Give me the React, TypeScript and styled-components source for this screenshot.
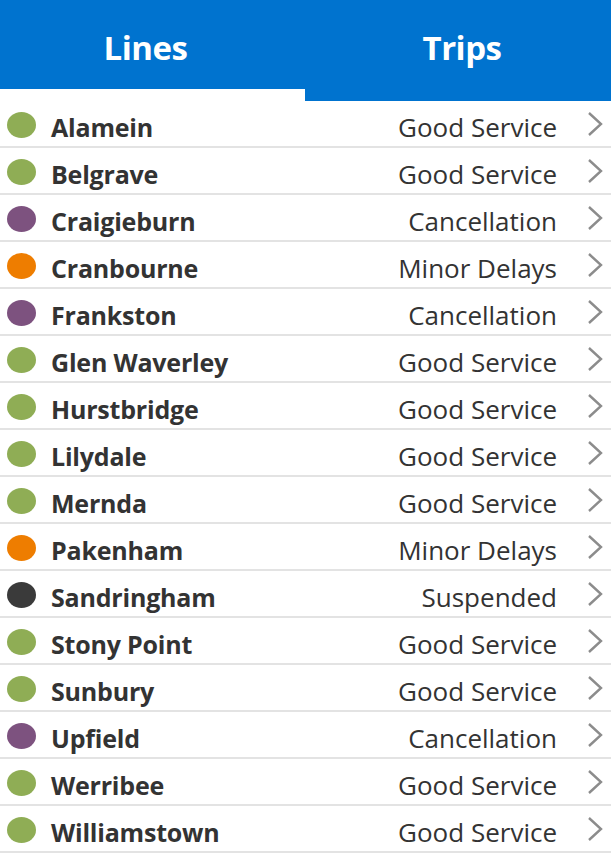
import React from "react";
import styled, { createGlobalStyle } from "styled-components";

const Global = createGlobalStyle`
  html, body { margin: 0; padding: 0; background: #fff; }
  body { font-family: "Open Sans", "Noto Sans", sans-serif; }
`;

const Page = styled.div`
  width: 611px;
  display: flex;
  flex-direction: column;
`;

const Tabs = styled.div`
  display: grid;
  grid-template-columns: 305px 1fr;
  align-items: start;
`;

const Tab = styled.div<{ $active?: boolean }>`
  height: ${(p) => (p.$active ? 101 : 89)}px;
  background: #0073cf;
  color: #fff;
  font-weight: 700;
  font-size: 33px;
  letter-spacing: -0.5px;
  display: flex;
  align-items: center;
  justify-content: center;
  padding: ${(p) => (p.$active ? "6px 0 12px 8px" : "6px 14px 0 0")};
  box-sizing: border-box;
  line-height: 1;
`;

const List = styled.div`
  display: flex;
  flex-direction: column;
`;

const Row = styled.div`
  height: 39px;
  padding: 6px 0 0 7px;
  border-bottom: 2px solid #e3e3e3;
  display: flex;
  align-items: center;
`;

const Dot = styled.span<{ $color: string }>`
  width: 29px;
  height: 26px;
  border-radius: 50%;
  background: ${(p) => p.$color};
  flex: none;
  margin-top: -4px;
`;

const Name = styled.span`
  margin-left: 15px;
  font-weight: 700;
  font-size: 25px;
  color: #333;
  flex: 1;
  letter-spacing: -0.2px;
`;

const Status = styled.span`
  font-weight: 400;
  font-size: 26px;
  color: #333;
`;

const Chevron = styled.svg`
  width: 16px;
  height: 26px;
  margin: -6px 8px 0 30px;
  flex: none;
`;

const lines: [string, string, string][] = [
  ["Alamein", "Good Service", "#8fad55"],
  ["Belgrave", "Good Service", "#8fad55"],
  ["Craigieburn", "Cancellation", "#7d527f"],
  ["Cranbourne", "Minor Delays", "#ee7d00"],
  ["Frankston", "Cancellation", "#7d527f"],
  ["Glen Waverley", "Good Service", "#8fad55"],
  ["Hurstbridge", "Good Service", "#8fad55"],
  ["Lilydale", "Good Service", "#8fad55"],
  ["Mernda", "Good Service", "#8fad55"],
  ["Pakenham", "Minor Delays", "#ee7d00"],
  ["Sandringham", "Suspended", "#3a3a3a"],
  ["Stony Point", "Good Service", "#8fad55"],
  ["Sunbury", "Good Service", "#8fad55"],
  ["Upfield", "Cancellation", "#7d527f"],
  ["Werribee", "Good Service", "#8fad55"],
  ["Williamstown", "Good Service", "#8fad55"],
];

export default function App() {
  return (
    <Page>
      <Global />
      <Tabs>
        <Tab>Lines</Tab>
        <Tab $active>Trips</Tab>
      </Tabs>
      <List>
        {lines.map(([name, status, color]) => (
          <Row key={name}>
            <Dot $color={color} />
            <Name>{name}</Name>
            <Status>{status}</Status>
            <Chevron viewBox="0 0 16 26">
              <path d="M2 2 L14 13 L2 24" fill="none" stroke="#8c8c8c" strokeWidth="2.4" />
            </Chevron>
          </Row>
        ))}
      </List>
    </Page>
  );
}
